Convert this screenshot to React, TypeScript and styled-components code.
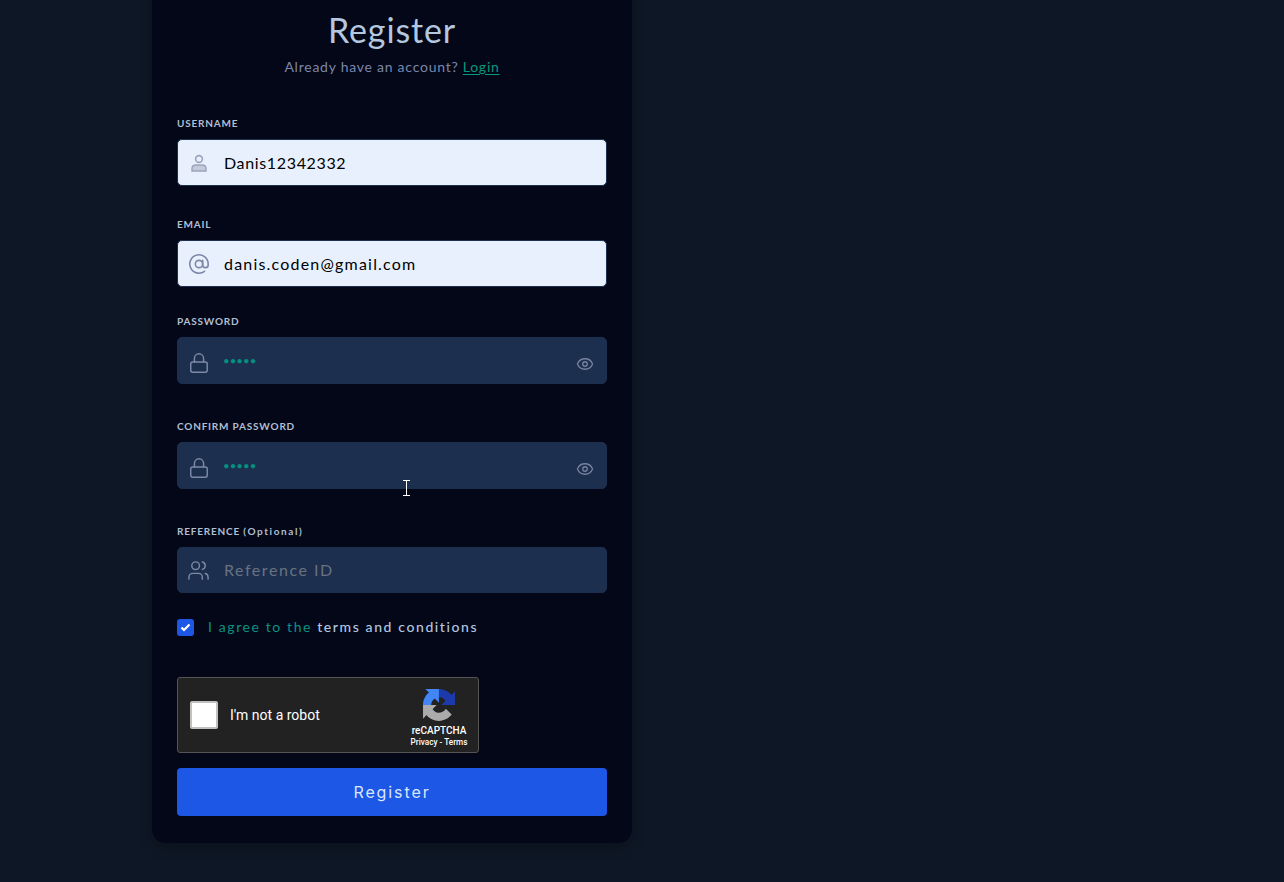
import styled, { createGlobalStyle } from 'styled-components';
import { AtSign, Eye, Lock, Users } from 'lucide-react';
import type { ReactNode } from 'react';

const GlobalStyle = createGlobalStyle`
    html, body {
        margin: 0;
        height: 882px;
        overflow: hidden;
        background-color: #0e1725;
    }
    body {
        font-family: "Lato", "Noto Sans", sans-serif;
    }
`;

const Page = styled.div`
    position: relative;
    height: 882px;
    overflow: hidden;
    padding-left: 152px;
`;

const Card = styled.div`
    width: 480px;
    height: 1043px;
    margin-top: -200px;
    box-sizing: border-box;
    padding: 0 25px 27px;
    display: flex;
    flex-direction: column;
    justify-content: flex-end;
    background-color: #040717;
    border-radius: 14px;
    box-shadow: 0 4px 14px rgba(0, 0, 0, 0.25);
`;

const Head = styled.div`
    text-align: center;
    margin-bottom: 39px;
`;

const Title = styled.h1`
    margin: 0 0 7px;
    font-size: 34px;
    line-height: 42px;
    font-weight: 400;
    letter-spacing: 0.85px;
    color: #b3c8df;
`;

const Subtitle = styled.p`
    margin: 0;
    font-size: 14px;
    line-height: 18px;
    letter-spacing: 0.75px;
    color: #7b86ab;
    a {
        color: #07997f;
        text-decoration: underline;
        text-underline-offset: 2px;
    }
`;

const Field = styled.div<{ $gap: number }>`
    margin-bottom: ${(p) => p.$gap}px;
`;

const Label = styled.label`
    display: block;
    height: 16px;
    margin-bottom: 8px;
    font-size: 10px;
    line-height: 16px;
    font-weight: 700;
    letter-spacing: 0.8px;
    color: #b0bfd3;
    span {
        letter-spacing: 1.6px;
    }
`;

const InputBox = styled.div<{ $filled?: boolean; $height?: number }>`
    height: ${(p) => p.$height ?? 47}px;
    box-sizing: border-box;
    display: flex;
    align-items: center;
    padding: 0 12px 0 10px;
    border-radius: 5px;
    border: 1px solid #1c2f4f;
    background-color: ${(p) => (p.$filled ? '#e8f0fe' : '#1c2f4f')};
`;

const IconSlot = styled.span<{ $drop?: number }>`
    width: 21px;
    margin: ${(p) => p.$drop ?? 1}px 15px 0 0;
    display: flex;
    justify-content: center;
    color: #7c88a6;
    svg {
        flex-shrink: 0;
    }
`;

const TextInput = styled.input<{ $filled?: boolean; $tight?: boolean }>`
    flex: 1;
    min-width: 0;
    padding: 0;
    border: none;
    outline: none;
    background: transparent;
    font-family: inherit;
    font-size: 16px;
    letter-spacing: ${(p) => (p.$tight ? 0.65 : 1.2)}px;
    color: ${(p) => (p.$filled ? '#000000' : '#058f7f')};
    &::placeholder {
        color: #6a7280;
        opacity: 1;
        letter-spacing: 1.55px;
    }
`;

const PasswordInput = styled(TextInput)`
    font-size: 11.5px;
    letter-spacing: 0;
    margin: 0 0 1px -1px;
`;

const PlaceholderInput = styled(TextInput)`
    margin-bottom: 2px;
`;

const EyeButton = styled.span`
    display: flex;
    margin: 6px 0 0;
    color: #76829f;
`;

const AgreeRow = styled.div`
    display: flex;
    align-items: center;
    gap: 14px;
    height: 17px;
    margin-bottom: 41px;
    font-size: 14px;
    letter-spacing: 1.6px;
    color: #0a9384;
    strong {
        font-weight: 500;
        color: #b2c7e2;
    }
`;

const AgreeText = styled.span`
    padding-bottom: 2px;
`;

const CheckBox = styled.span`
    width: 17px;
    height: 17px;
    display: flex;
    align-items: center;
    justify-content: center;
    border-radius: 3px;
    background-color: #1c57e5;
`;

const Captcha = styled.div`
    width: 302px;
    height: 76px;
    box-sizing: border-box;
    display: flex;
    align-items: center;
    margin-bottom: 15px;
    padding: 0 10px 0 12px;
    background-color: #222222;
    border: 1px solid #555555;
    border-radius: 3px;
    font-family: "Roboto", sans-serif;
    color: #ffffff;
`;

const CaptchaBox = styled.span`
    width: 24px;
    height: 24px;
    background-color: #ffffff;
    border: 2px solid #c1c1c1;
    border-radius: 2px;
`;

const CaptchaText = styled.span`
    flex: 1;
    margin-left: 12px;
    font-size: 14px;
`;

const CaptchaBrand = styled.div`
    width: 58px;
    display: flex;
    flex-direction: column;
    align-items: center;
    padding-top: 6px;
    svg {
        margin-bottom: 3px;
    }
`;

const BrandName = styled.span`
    font-size: 10px;
    line-height: 13px;
    font-weight: 500;
    white-space: nowrap;
`;

const BrandLinks = styled.span`
    font-size: 8.2px;
    line-height: 11px;
    font-weight: 500;
    white-space: nowrap;
`;

const SubmitButton = styled.button`
    width: 430px;
    height: 48px;
    padding: 0;
    border: none;
    border-radius: 4px;
    background-color: #1c57e5;
    font-family: "Inter", sans-serif;
    font-size: 16px;
    letter-spacing: 1.9px;
    color: #dbe7fb;
`;

const TextCursor = styled.svg`
    position: absolute;
    left: 403px;
    top: 480px;
`;

const UserIcon = () => (
    <svg width="18" height="18" viewBox="0 0 18 18" fill="none">
        <circle cx="9" cy="5" r="3.4" stroke="#9aa4bc" strokeWidth="1.6" />
        <path
            d="M2 17v-2.500C2 12 4 11 6 11h6c2 0 4 1 4 3.500V17z"
            fill="#c3cad9"
            stroke="#9aa4bc"
            strokeWidth="1.4"
        />
    </svg>
);

const RecaptchaLogo = () => (
    <svg width="32" height="32" viewBox="0 0 64 64">
        <path
            d="M64 31.955l-.033-1.37V4.687l-7.16 7.16C50.948 4.674 42.033.093 32.05.093c-10.4 0-19.622 4.96-25.458 12.64l11.736 11.86a15.55 15.55 0 0 1 4.754-5.334c2.05-1.6 4.952-2.906 8.968-2.906.485 0 .86.057 1.135.163 4.976.393 9.288 3.14 11.828 7.124l-8.307 8.307 32.294.01"
            fill="#1c3aa9"
        />
        <path
            d="M31.862 0l-1.37.033H4.594l7.16 7.16C4.58 13.052 0 21.967 0 31.95c0 10.4 4.96 19.622 12.64 25.458l11.86-11.736a15.55 15.55 0 0 1-5.334-4.754c-1.6-2.05-2.906-4.952-2.906-8.968 0-.485.057-.86.163-1.135.393-4.976 3.14-9.288 7.124-11.828l8.307 8.307L31.862 0"
            fill="#4285f4"
        />
        <path
            d="M.001 32l.033 1.37v25.898l7.16-7.160c5.86 7.173 14.775 11.754 24.76 11.754 10.4 0 19.621-4.96 25.457-12.64l-11.736-11.86a15.55 15.55 0 0 1-4.754 5.334c-2.05 1.6-4.952 2.906-8.968 2.906-.485 0-.86-.057-1.135-.163-4.976-.393-9.288-3.14-11.828-7.124l8.307-8.307L.001 32"
            fill="#ababab"
        />
    </svg>
);

type FormFieldProps = {
    label: ReactNode;
    gap: number;
    children: ReactNode;
};

function FormField({ label, gap, children }: FormFieldProps) {
    return (
        <Field $gap={gap}>
            <Label>{label}</Label>
            {children}
        </Field>
    );
}

function App() {
    return (
        <Page>
            <GlobalStyle />
            <Card>
                <Head>
                    <Title>Register</Title>
                    <Subtitle>
                        Already have an account? <a href="#login">Login</a>
                    </Subtitle>
                </Head>
                <FormField label="USERNAME" gap={30}>
                    <InputBox $filled>
                        <IconSlot>
                            <UserIcon />
                        </IconSlot>
                        <TextInput $filled $tight readOnly value="Danis12342332" />
                    </InputBox>
                </FormField>
                <FormField label="EMAIL" gap={26}>
                    <InputBox $filled>
                        <IconSlot>
                            <AtSign size={22} strokeWidth={1.75} />
                        </IconSlot>
                        <TextInput $filled readOnly value="danis.coden@gmail.com" />
                    </InputBox>
                </FormField>
                <FormField label="PASSWORD" gap={34}>
                    <InputBox>
                        <IconSlot $drop={5}>
                            <Lock size={22} strokeWidth={1.6} />
                        </IconSlot>
                        <PasswordInput type="password" readOnly value="12345" />
                        <EyeButton>
                            <Eye size={18} strokeWidth={1.75} />
                        </EyeButton>
                    </InputBox>
                </FormField>
                <FormField label="CONFIRM PASSWORD" gap={34}>
                    <InputBox>
                        <IconSlot $drop={5}>
                            <Lock size={22} strokeWidth={1.6} />
                        </IconSlot>
                        <PasswordInput type="password" readOnly value="12345" />
                        <EyeButton>
                            <Eye size={18} strokeWidth={1.75} />
                        </EyeButton>
                    </InputBox>
                </FormField>
                <FormField
                    label={
                        <>
                            REFERENCE <span>(Optional)</span>
                        </>
                    }
                    gap={26}
                >
                    <InputBox $height={46}>
                        <IconSlot>
                            <Users size={23} strokeWidth={1.5} />
                        </IconSlot>
                        <PlaceholderInput placeholder="Reference ID" />
                    </InputBox>
                </FormField>
                <AgreeRow>
                    <CheckBox>
                        <svg width="11" height="9" viewBox="0 0 11 9" fill="none">
                            <path d="M1.500 4.500L4 7l5.500-5.500" stroke="#ffffff" strokeWidth="2.200" />
                        </svg>
                    </CheckBox>
                    <AgreeText>
                        I agree to the <strong>terms and conditions</strong>
                    </AgreeText>
                </AgreeRow>
                <Captcha>
                    <CaptchaBox />
                    <CaptchaText>I'm not a robot</CaptchaText>
                    <CaptchaBrand>
                        <RecaptchaLogo />
                        <BrandName>reCAPTCHA</BrandName>
                        <BrandLinks>Privacy - Terms</BrandLinks>
                    </CaptchaBrand>
                </Captcha>
                <SubmitButton>Register</SubmitButton>
            </Card>
            <TextCursor width="7" height="16" viewBox="0 0 7 16" fill="none">
                <path d="M0 .5h7M0 15.500h7M3.500 .5v15" stroke="#ffffff" strokeWidth="1" />
            </TextCursor>
        </Page>
    );
}

export default App;
